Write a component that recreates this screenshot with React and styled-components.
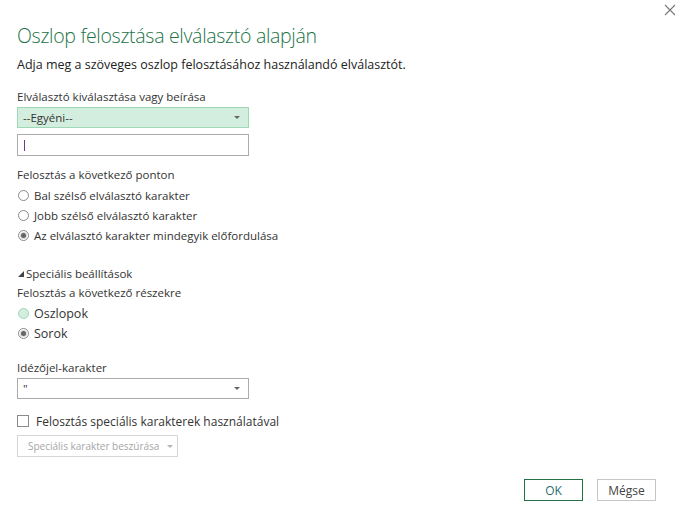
import React from "react";
import styled, { createGlobalStyle } from "styled-components";

const GlobalStyle = createGlobalStyle`
  html, body {
    margin: 0;
    padding: 0;
    background: #fff;
  }
  body {
    font-family: "Open Sans", "Noto Sans", sans-serif;
    color: #333;
  }
`;

const Dialog = styled.div`
  position: relative;
  width: 686px;
  height: 519px;
  box-sizing: border-box;
  padding: 22px 30px 0 17px;
  display: flex;
  flex-direction: column;
`;

const Close = styled.button`
  position: absolute;
  top: 2px;
  right: 8px;
  width: 16px;
  height: 16px;
  padding: 0;
  border: none;
  background: none;
  display: flex;
  align-items: center;
  justify-content: center;
`;

const Title = styled.h1`
  margin: 0;
  font-size: 19.5px;
  font-weight: 300;
  line-height: 28px;
  color: #217346;
  letter-spacing: -0.3px;
`;

const Subtitle = styled.p`
  margin: 6px 0 0;
  font-size: 12.5px;
  line-height: 18px;
  color: #222;
`;

const Label = styled.div`
  margin-top: ${(p) => p.$top || 0}px;
  font-size: 11.5px;
  line-height: 20px;
  color: #333;
`;

const Select = styled.div`
  box-sizing: border-box;
  width: 232px;
  height: 21px;
  padding: 0 8px 0 5px;
  display: flex;
  align-items: center;
  justify-content: space-between;
  font-size: 11.5px;
  color: #333;
  background: ${(p) => (p.$active ? "#d3eedf" : "#fff")};
  border: 1px solid ${(p) => (p.$active ? "#9fd8b7" : "#ababab")};
`;

const Caret = styled.span`
  width: 0;
  height: 0;
  border-left: 3px solid transparent;
  border-right: 3px solid transparent;
  border-top: 3px solid ${(p) => p.$color || "#666"};
`;

const Input = styled.div`
  box-sizing: border-box;
  width: 232px;
  height: 22px;
  margin-top: 6px;
  padding-left: 6px;
  display: flex;
  align-items: center;
  border: 1px solid #ababab;
`;

const Cursor = styled.span`
  width: 1px;
  height: 11px;
  background: #6a3d8f;
`;

const Option = styled.label`
  display: flex;
  align-items: center;
  gap: 5px;
  height: 20px;
  padding-left: 1px;
  font-size: ${(p) => (p.$large ? "12.5px" : "11.5px")};
  color: #333;
`;

const Radio = styled.span`
  box-sizing: border-box;
  width: 11px;
  height: 11px;
  border-radius: 50%;
  border: 1px solid ${(p) => (p.$hover ? "#9fd8b7" : "#8a8a8a")};
  background: ${(p) => (p.$hover ? "#d3eedf" : "#fff")};
  display: flex;
  align-items: center;
  justify-content: center;
  &::after {
    content: "";
    display: ${(p) => (p.$checked ? "block" : "none")};
    width: 5px;
    height: 5px;
    border-radius: 50%;
    background: #666;
    box-shadow: 0 0 0 1px #d8d8d8;
  }
`;

const Expander = styled.div`
  margin-top: 18px;
  display: flex;
  align-items: center;
  gap: 2px;
  height: 20px;
  font-size: 11.5px;
  color: #333;
`;

const Triangle = styled.span`
  width: 0;
  height: 0;
  margin-left: 1px;
  margin-top: 2px;
  border-left: 6px solid transparent;
  border-bottom: 6px solid #444;
`;

const CheckRow = styled.label`
  display: flex;
  align-items: center;
  gap: 7px;
  margin-top: 12px;
  height: 20px;
  font-size: 12px;
  color: #333;
`;

const Box = styled.span`
  box-sizing: border-box;
  width: 12px;
  height: 12px;
  border: 1px solid #8a8a8a;
  background: #fff;
`;

const DisabledButton = styled.div`
  box-sizing: border-box;
  width: 161px;
  height: 22px;
  margin-top: 4px;
  padding: 0 9px 0 10px;
  display: flex;
  align-items: center;
  gap: 8px;
  white-space: nowrap;
  font-size: 10px;
  color: #a6a6a6;
  border: 1px solid #d6d6d6;
`;

const Footer = styled.div`
  display: flex;
  justify-content: flex-end;
  gap: 14px;
  margin-top: 22px;
`;

const Button = styled.button`
  box-sizing: border-box;
  width: 59px;
  height: 22px;
  padding: 0;
  background: #fff;
  font-family: inherit;
  font-size: 12px;
  color: ${(p) => (p.$primary ? "#2a6e70" : "#444")};
  border: 1px solid ${(p) => (p.$primary ? "#217346" : "#c6c6c6")};
`;

export default function App() {
  return (
    <>
      <GlobalStyle />
      <Dialog>
        <Close aria-label="Bezárás">
          <svg width="12" height="12" viewBox="0 0 12 12">
            <path d="M1 1L11 11M11 1L1 11" stroke="#777" strokeWidth="1.1" />
          </svg>
        </Close>
        <Title>Oszlop felosztása elválasztó alapján</Title>
        <Subtitle>Adja meg a szöveges oszlop felosztásához használandó elválasztót.</Subtitle>

        <Label $top={13}>Elválasztó kiválasztása vagy beírása</Label>
        <Select $active>
          --Egyéni--
          <Caret />
        </Select>
        <Input>
          <Cursor />
        </Input>

        <Label $top={9}>Felosztás a következő ponton</Label>
        <Option>
          <Radio />
          Bal szélső elválasztó karakter
        </Option>
        <Option>
          <Radio />
          Jobb szélső elválasztó karakter
        </Option>
        <Option>
          <Radio $checked />
          Az elválasztó karakter mindegyik előfordulása
        </Option>

        <Expander>
          <Triangle />
          Speciális beállítások
        </Expander>
        <Label>Felosztás a következő részekre</Label>
        <Option $large>
          <Radio $hover />
          Oszlopok
        </Option>
        <Option $large>
          <Radio $checked />
          Sorok
        </Option>

        <Label $top={15}>Idézőjel-karakter</Label>
        <Select>
          "
          <Caret />
        </Select>

        <CheckRow>
          <Box />
          Felosztás speciális karakterek használatával
        </CheckRow>
        <DisabledButton>
          Speciális karakter beszúrása
          <Caret $color="#b5b5b5" />
        </DisabledButton>

        <Footer>
          <Button $primary>OK</Button>
          <Button>Mégse</Button>
        </Footer>
      </Dialog>
    </>
  );
}
